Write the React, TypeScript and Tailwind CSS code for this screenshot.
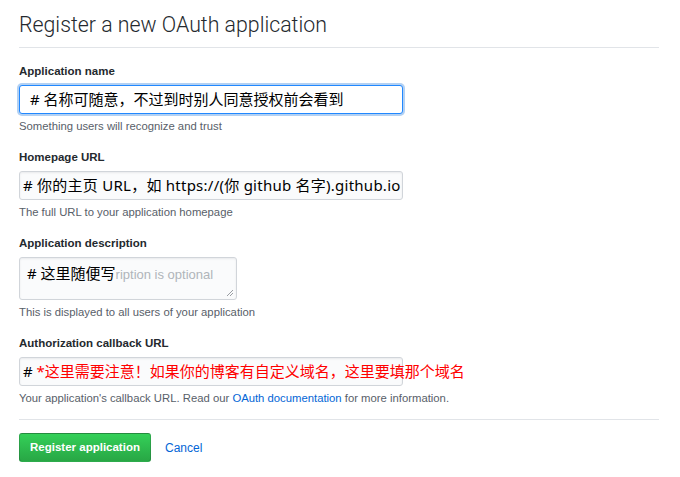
const sans = "font-['Liberation_Sans','Noto_Sans_CJK_SC',sans-serif]";
const field = "font-['Noto_Sans','Noto_Sans_CJK_SC',sans-serif]";

function Label({ children }: { children: React.ReactNode }) {
  return <div className="h-4 text-[11.5px] leading-4 font-bold text-[#24292e]">{children}</div>;
}

function Hint({ children }: { children: React.ReactNode }) {
  return <div className="mt-[5px] h-[14px] text-[11.3px] leading-[14px] text-[#586069]">{children}</div>;
}

export default function App() {
  return (
    <div className={`w-[680px] h-[477px] bg-white pl-[19px] pr-[21px] overflow-hidden ${sans}`}>
      {/* header */}
      <div className="h-[48px] pt-[11px] border-b border-[#e1e4e8]">
        <h1 className="font-['Roboto',sans-serif] font-light text-[21.3px] leading-[28px] text-[#24292e]">
          Register a new OAuth application
        </h1>
      </div>

      {/* name */}
      <div className="mt-[15px]">
        <Label>Application name</Label>
        <div className={`mt-[6px] w-[384px] h-[29px] pl-[10px] bg-white border border-[#2188ff] rounded-[3px] shadow-[0_0_0_2px_rgba(3,102,214,0.3)] text-[15px] leading-[27px] text-black whitespace-nowrap ${field}`}>
          # 名称可随意，不过到时别人同意授权前会看到
        </div>
        <Hint>Something users will recognize and trust</Hint>
      </div>

      {/* homepage */}
      <div className="mt-[16px]">
        <Label>Homepage URL</Label>
        <div className={`mt-[6px] w-[384px] h-[29px] pl-[3px] bg-[#fafbfc] border border-[#d1d5da] rounded-[3px] shadow-[inset_0_1px_2px_rgba(27,31,35,0.075)] text-[15px] leading-[27px] tracking-[0.25px] text-black whitespace-nowrap ${field}`}>
          # 你的主页 URL，如 https://(你 github 名字).github.io
        </div>
        <Hint>The full URL to your application homepage</Hint>
      </div>

      {/* description */}
      <div className="mt-[16px]">
        <Label>Application description</Label>
        <div className="relative mt-[6px] w-[218px] h-[43px] pl-[7px] pt-[4px] bg-[#fafbfc] border border-[#d1d5da] rounded-[3px] shadow-[inset_0_1px_2px_rgba(27,31,35,0.075)] whitespace-nowrap">
          <span className={`text-[15px] leading-[22px] text-black ${field}`}>
            # 这里随便写
          </span>
          <span className="text-[13px] leading-[22px] text-[#b0b5ba]">ription is optional</span>
          <svg className="absolute right-[2px] bottom-[2px]" width="8" height="8" viewBox="0 0 8 8">
            <path d="M7 1L1 7M7 4L4 7" stroke="#9a9ea3" strokeWidth="1" />
          </svg>
        </div>
        <Hint>This is displayed to all users of your application</Hint>
      </div>

      {/* callback */}
      <div className="mt-[16px]">
        <Label>Authorization callback URL</Label>
        <div className={`mt-[6px] w-[384px] h-[29px] pl-[3px] bg-[#fafbfc] border border-[#d1d5da] rounded-[3px] shadow-[inset_0_1px_2px_rgba(27,31,35,0.075)] text-[15px] leading-[27px] whitespace-nowrap ${field}`}>
          <span className="text-black"># </span>
          <span className="text-[#ff0000]">*这里需要注意！如果你的博客有自定义域名，这里要填那个域名</span>
        </div>
        <Hint>
          Your application's callback URL. Read our{" "}
          <a href="#" className="text-[#0366d6]">OAuth documentation</a> for more information.
        </Hint>
      </div>

      <div className="mt-[14px] border-t border-[#e1e4e8]" />

      <div className="mt-[13px] flex items-center gap-[14px]">
        <button className="h-[29px] w-[132px] rounded-[3px] border border-[rgba(27,31,35,0.2)] bg-gradient-to-b from-[#34d058] to-[#28a745] text-[11.5px] font-bold text-white">
          Register application
        </button>
        <a href="#" className="text-[12px] text-[#0366d6]">Cancel</a>
      </div>
    </div>
  );
}
